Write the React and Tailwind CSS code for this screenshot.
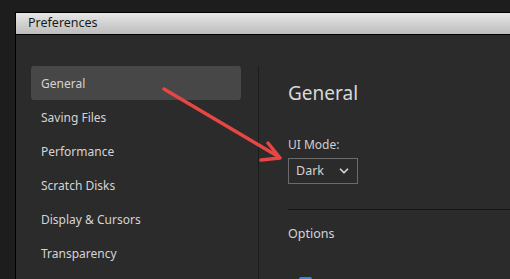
import React from "react";
import { ChevronDown } from "lucide-react";

const items = [
    "General",
    "Saving Files",
    "Performance",
    "Scratch Disks",
    "Display & Cursors",
    "Transparency",
];

export default function App() {
    return (
        <div
            className="relative h-[279px] w-[510px] overflow-hidden bg-[#1d1d1d] pt-[12px] pl-[15px]"
            style={{ fontFamily: '"Noto Sans", "Open Sans", sans-serif' }}
        >
            <div className="flex h-full flex-col border-l border-t border-black">
                <div className="flex h-[22px] shrink-0 items-center border-b border-black bg-gradient-to-b from-[#e6e6e6] to-[#bdbdbd] pl-[12px] text-[12.5px] text-[#1a1a1a]">
                    Preferences
                </div>

                <div className="flex min-h-0 flex-1 overflow-hidden bg-[#2b2b2b] pt-[31px]">
                    <div className="flex w-[243px] shrink-0 flex-col border-r border-[#1c1c1c] pl-[15px]">
                        {items.map((item, i) => (
                            <div
                                key={item}
                                className={
                                    "flex h-[34px] w-[210px] shrink-0 items-center rounded-[3px] pl-[10px] pt-[1px] text-[12px] text-[#d4d4d4] " +
                                    (i === 0 ? "bg-[#474747]" : "")
                                }
                            >
                                {item}
                            </div>
                        ))}
                    </div>

                    <div className="flex flex-1 flex-col pl-[29px]">
                        <div className="mt-[13px] shrink-0 text-[19px] leading-[28px] text-[#d8d8d8]">
                            General
                        </div>
                        <div className="mt-[30px] shrink-0 text-[12px] leading-[16px] text-[#cfcfcf]">
                            UI Mode:
                        </div>
                        <div className="mt-[5px] flex h-[26px] w-[70px] shrink-0 items-center justify-between border border-[#6b6b6b] pl-[7px] pr-[6px] text-[12.5px] text-[#d4d4d4]">
                            <span>Dark</span>
                            <ChevronDown className="h-[14px] w-[14px]" strokeWidth={3} />
                        </div>
                        <div className="mt-[25px] h-px shrink-0 bg-[#161616]" />
                        <div className="mt-[15px] shrink-0 text-[12.5px] leading-[18px] text-[#d4d4d4]">
                            Options
                        </div>
                        <div className="ml-[11px] mt-[34px] h-[13px] w-[13px] shrink-0 rounded-[2px] bg-[#3f86d8]" />
                    </div>
                </div>
            </div>

            <svg
                className="absolute left-0 top-0"
                width="510"
                height="279"
                viewBox="0 0 510 279"
            >
                <g
                    stroke="#e84545"
                    strokeWidth="3.5"
                    strokeLinecap="round"
                    strokeLinejoin="round"
                    fill="none"
                >
                    <line x1="164" y1="89" x2="279" y2="157" />
                    <polyline points="268,143 280,158 261,160" />
                </g>
            </svg>
        </div>
    );
}
